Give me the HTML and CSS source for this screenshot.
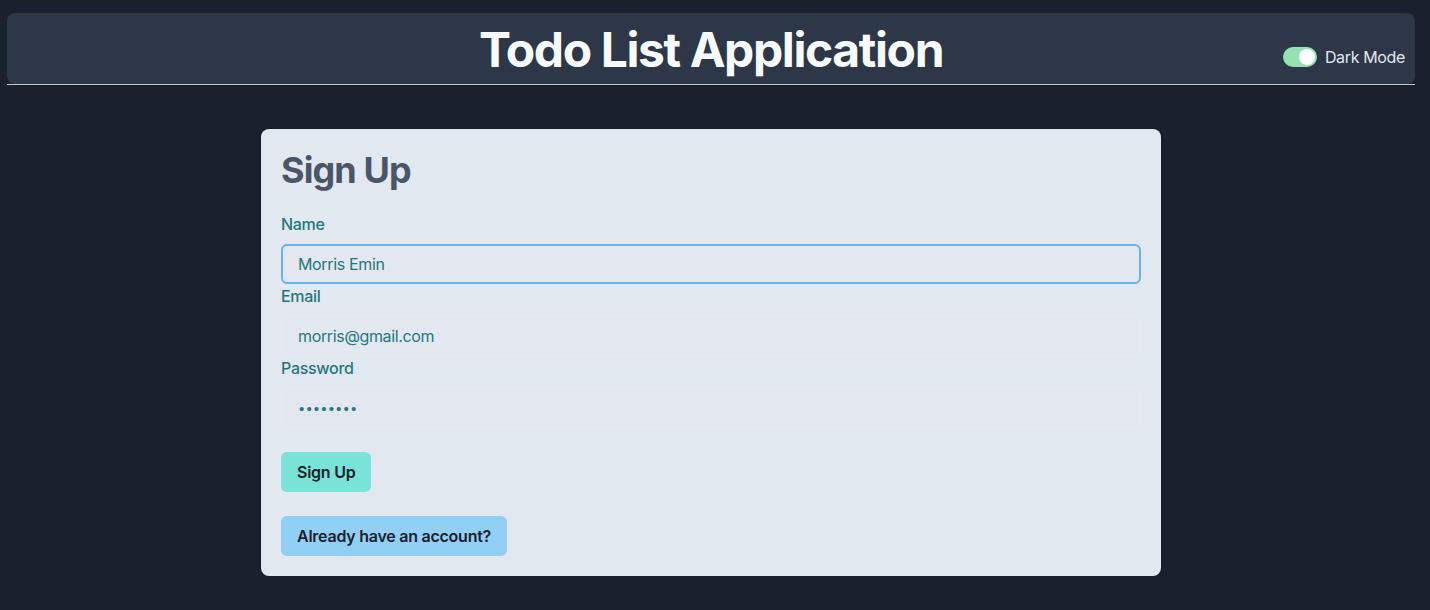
FILE: index.html
```html
<!DOCTYPE html>
<html lang="en">
<head>
<meta charset="utf-8">
<title>Todo List Application</title>
<link rel="stylesheet" href="styles.css">
</head>
<body>
<div class="page">
  <div class="header-wrap">
    <header class="header">
      <div class="spacer"></div>
      <h1 class="title">Todo List Application</h1>
      <label class="mode">
        <span class="switch"><span class="thumb"></span></span>
        <span class="mode-text">Dark Mode</span>
      </label>
    </header>
  </div>
  <main class="main">
    <section class="card">
      <h2 class="card-title">Sign Up</h2>
      <form class="form">
        <div class="field">
          <label class="label" for="name">Name</label>
          <input class="input input-focus" id="name" type="text" value="Morris Emin" autofocus>
        </div>
        <div class="field">
          <label class="label" for="email">Email</label>
          <input class="input" id="email" type="email" value="morris@gmail.com">
        </div>
        <div class="field">
          <label class="label" for="password">Password</label>
          <input class="input input-pass" id="password" type="password" value="12345678">
        </div>
        <button class="btn btn-teal" type="button">Sign Up</button>
        <button class="btn btn-blue" type="button">Already have an account?</button>
      </form>
    </section>
  </main>
</div>
</body>
</html>
```
FILE: styles.css
```css
* { box-sizing: border-box; }
html, body { margin: 0; padding: 0; }
body {
  background: #1a202c;
  font-family: Inter, "Noto Sans", "Liberation Sans", sans-serif;
  color: #e2e8f0;
}
.page {
  padding: 13px 15px 0 7px;
}
.header-wrap {
  border-bottom: 1px solid #c3c8d0;
}
.header {
  background: #2d3748;
  border-radius: 8px;
  height: 71px;
  display: grid;
  grid-template-columns: 1fr auto 1fr;
  align-items: center;
  padding: 0 10px 0 10px;
}
.title {
  margin: 0;
  font-size: 48px;
  font-weight: 700;
  color: #f7fafc;
  line-height: 1;
  letter-spacing: -1.4px;
  transform: translateY(1px);
}
.mode {
  justify-self: end;
  align-self: end;
  margin-bottom: 17px;
  display: flex;
  align-items: center;
  gap: 8px;
}
.switch {
  width: 34px;
  height: 20px;
  border-radius: 10px;
  background: #94e2b1;
  padding: 2px;
  display: flex;
  justify-content: flex-end;
}
.thumb {
  width: 16px;
  height: 16px;
  border-radius: 50%;
  background: #ffffff;
}
.mode-text {
  font-size: 16px;
  color: #e2e8f0;
  letter-spacing: -0.35px;
}
.main {
  padding-top: 44px;
  display: flex;
  justify-content: center;
}
.card {
  width: 900px;
  background: #e2e8f0;
  border-radius: 8px;
  padding: 20px 20px 20px;
  box-shadow: 0 1px 3px rgba(0,0,0,0.35);
}
.card-title {
  margin: 0 0 20px;
  font-size: 36px;
  line-height: 43px;
  font-weight: 700;
  color: #4a5568;
  letter-spacing: -0.9px;
}
.form {
  display: flex;
  flex-direction: column;
  align-items: flex-start;
}
.field {
  width: 100%;
  display: flex;
  flex-direction: column;
}
.label {
  font-size: 16px;
  line-height: 24px;
  font-weight: 500;
  color: #23797a;
  margin-bottom: 8px;
  letter-spacing: -0.3px;
}
.input {
  width: 100%;
  height: 40px;
  border: 1px solid #e8ecf2;
  border-radius: 6px;
  background: #e3e8f0;
  padding: 0 16px;
  font-family: inherit;
  font-size: 16px;
  color: #23797a;
  outline: none;
  caret-color: #1a202c;
  letter-spacing: -0.35px;
}
.input-focus {
  border: 2px solid #69b2e6;
  padding: 0 15px;
}
.input-pass {
  font-size: 13px;
  letter-spacing: 0.1px;
}
.btn {
  font-family: inherit;
  font-size: 16px;
  font-weight: 560;
  color: #1a202c;
  height: 40px;
  padding: 0 16px;
  border: none;
  border-radius: 6px;
  margin-top: 24px;
  letter-spacing: -0.25px;
}
.btn-teal { background: #78e3d6; }
.btn-blue { background: #92cff5; }
```
